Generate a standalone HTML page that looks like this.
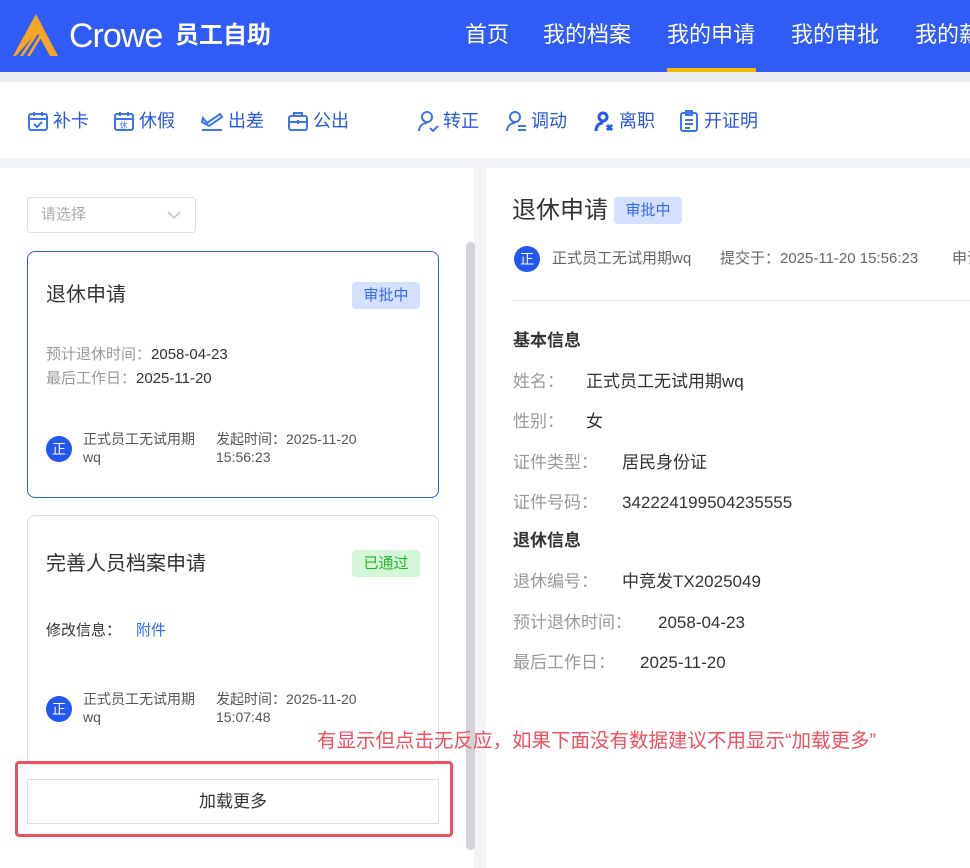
<!DOCTYPE html>
<html><head><meta charset="utf-8"><style>
*{margin:0;padding:0;box-sizing:border-box}
body{width:970px;height:868px;overflow:hidden;background:#f3f4f8;font-family:"Liberation Sans","Noto Sans CJK SC",sans-serif;position:relative}
.a{position:absolute;white-space:nowrap}
.hdr{position:absolute;left:0;top:0;width:970px;height:72px;background:#2f5cf6}
.nav{color:#fff;font-size:22px;top:20px;line-height:30px}
.tb{position:absolute;left:0;top:82px;width:970px;height:76px;background:#fff}
.ti{color:#2857e0;font-size:18px;top:109px;display:flex;align-items:center;gap:4px;line-height:24px}
.lp{position:absolute;left:0;top:168px;width:474px;height:700px;background:#fff}
.rp{position:absolute;left:486px;top:168px;width:484px;height:700px;background:#fff}
.card{position:absolute;left:27px;width:412px;border-radius:8px;background:#fff}
.tag{position:absolute;font-size:15px;border-radius:4px;text-align:center;line-height:27px}
.av{position:absolute;width:26px;height:26px;border-radius:50%;background:#2456f0;color:#fff;font-size:14px;text-align:center;line-height:26px}
.sm{font-size:14px;color:#555;line-height:18px}
.lb{color:#999;font-size:17px;line-height:22px}
.vl{color:#333;font-size:17px;line-height:22px}
.l20{line-height:20px}
</style></head><body>
<div class="hdr"></div>
<svg class="a" style="left:10px;top:12px" width="52" height="46" viewBox="0 0 52 46">
<path d="M26 2 L48 44 L40 44 L27 20 Z" fill="#f5a623"/>
<path d="M26 2 L27 20 L6 44 L3 44 Z" fill="#f5a623"/>
<path d="M28 22 L13 44 L10 44 L27 18 Z" fill="#f5a623"/>
<path d="M31 26 L20 44 L17 44 L30 22 Z" fill="#f5a623"/>
</svg>
<div class="a" style="left:69px;top:16px;color:#fff;font-size:34px;line-height:40px;letter-spacing:-1px">Crowe</div>
<div class="a" style="left:175px;top:21px;color:#fff;font-size:24px;line-height:30px;font-weight:bold">员工自助</div>
<div class="a nav" style="left:465px">首页</div>
<div class="a nav" style="left:543px">我的档案</div>
<div class="a nav" style="left:667px">我的申请</div>
<div class="a nav" style="left:791px">我的审批</div>
<div class="a nav" style="left:915px">我的薪资</div>
<div class="a" style="left:667px;top:68px;width:89px;height:4px;background:#f5b800"></div>
<div class="a" style="left:0;top:72px;width:970px;height:10px;background:#eceef2"></div>
<div class="tb"></div>
<div class="a ti" style="left:27px"><svg width="22" height="22" viewBox="0 0 22 22" fill="none" stroke="#3f74f0" stroke-width="2"><rect x="2" y="4" width="18" height="16" rx="2"/><path d="M2 9h18M7 2v4M15 2v4M7 14l3 3 5-5"/></svg>补卡</div>
<div class="a ti" style="left:113px"><svg width="22" height="22" viewBox="0 0 22 22" fill="none" stroke="#3f74f0" stroke-width="2"><rect x="2" y="4" width="18" height="16" rx="2"/><path d="M2 9h18M7 2v4M15 2v4"/><text x="6.5" y="18" font-size="8" fill="#3f74f0" stroke="none">休</text></svg>休假</div>
<div class="a ti" style="left:200px"><svg width="24" height="22" viewBox="0 0 24 22" fill="none" stroke="#3f74f0" stroke-width="2"><path d="M3 8l4 5 13-9 2 3-13 9-7-4zM2 20h20"/></svg>出差</div>
<div class="a ti" style="left:287px"><svg width="22" height="22" viewBox="0 0 22 22" fill="none" stroke="#3f74f0" stroke-width="2"><rect x="2" y="6" width="18" height="14" rx="2"/><path d="M7 6V3h8v3M2 12h18M11 10v4"/></svg>公出</div>
<div class="a ti" style="left:417px"><svg width="22" height="22" viewBox="0 0 22 22" fill="none" stroke="#3f74f0" stroke-width="2"><circle cx="10" cy="7" r="5"/><path d="M2 21c0-5 4-8 8-8M13 18l3 3 5-5"/></svg>转正</div>
<div class="a ti" style="left:505px"><svg width="22" height="22" viewBox="0 0 22 22" fill="none" stroke="#3f74f0" stroke-width="2"><circle cx="10" cy="7" r="5"/><path d="M2 21c0-5 4-8 8-8M13 16h8M13 20h8"/></svg>调动</div>
<div class="a ti" style="left:593px"><svg width="22" height="22" viewBox="0 0 22 22" fill="none" stroke="#2456f0" stroke-width="3"><circle cx="10" cy="7" r="4"/><path d="M3 21c0-5 3-8 7-8M14 15l5 5M19 15l-5 5"/></svg>离职</div>
<div class="a ti" style="left:678px"><svg width="22" height="22" viewBox="0 0 22 22" fill="none" stroke="#3f74f0" stroke-width="2"><rect x="3" y="3" width="16" height="18" rx="2"/><path d="M8 1h6v4H8zM7 10h8M7 14h8M7 18h5"/></svg>开证明</div>

<div class="lp"></div>
<div class="rp"></div>
<div class="a" style="left:27px;top:197px;width:169px;height:36px;border:1px solid #ddd;border-radius:4px;background:#fff"></div>
<div class="a l20" style="left:41px;top:205px;color:#aaa;font-size:15px">请选择</div>
<svg class="a" style="left:167px;top:210px" width="14" height="10"><path d="M1 2l6 6 6-6" fill="none" stroke="#bbb" stroke-width="1.3"/></svg>
<div class="a" style="left:466px;top:242px;width:9px;height:608px;border-radius:5px;background:#d2d3d7"></div>

<div class="card" style="top:251px;height:247px;border:1px solid #2b5ff0"></div>
<div class="a" style="left:46px;top:281px;font-size:20px;line-height:28px;color:#333">退休申请</div>
<div class="tag" style="left:352px;top:282px;width:68px;background:#d4e0fe;color:#2f6bf0">审批中</div>
<div class="a l20" style="left:46px;top:345px;font-size:15px;color:#999">预计退休时间：<span style="color:#333">2058-04-23</span></div>
<div class="a l20" style="left:46px;top:369px;font-size:15px;color:#999">最后工作日：<span style="color:#333">2025-11-20</span></div>
<div class="av" style="left:46px;top:436px">正</div>
<div class="a sm" style="left:83px;top:430px">正式员工无试用期<br>wq</div>
<div class="a sm" style="left:216px;top:430px">发起时间：2025-11-20<br>15:56:23</div>

<div class="card" style="top:515px;height:250px;border:1px solid #ddd"></div>
<div class="a" style="left:46px;top:550px;font-size:20px;line-height:28px;color:#333">完善人员档案申请</div>
<div class="tag" style="left:352px;top:550px;width:68px;background:#d5f5d8;color:#27b52e">已通过</div>
<div class="a l20" style="left:46px;top:621px;font-size:15px;color:#333">修改信息：</div>
<div class="a l20" style="left:136px;top:621px;font-size:15px;color:#2f6bf0">附件</div>
<div class="av" style="left:46px;top:696px">正</div>
<div class="a sm" style="left:83px;top:690px">正式员工无试用期<br>wq</div>
<div class="a sm" style="left:216px;top:690px">发起时间：2025-11-20<br>15:07:48</div>

<div class="a" style="left:15px;top:761px;width:438px;height:76px;border:3px solid #f0505f;border-radius:4px"></div>
<div class="a" style="left:27px;top:779px;width:412px;height:45px;border:1px solid #ddd;background:#fff;text-align:center;line-height:43px;font-size:17px;color:#333">加载更多</div>

<div class="a" style="left:512px;top:195px;font-size:24px;line-height:32px;color:#333">退休申请</div>
<div class="tag" style="left:614px;top:197px;width:68px;height:27px;background:#d4e0fe;color:#2f6bf0">审批中</div>
<div class="av" style="left:514px;top:246px">正</div>
<div class="a l20" style="left:552px;top:249px;font-size:15px;color:#666">正式员工无试用期wq</div>
<div class="a l20" style="left:720px;top:249px;font-size:15px;color:#666">提交于：2025-11-20 15:56:23</div>
<div class="a l20" style="left:952px;top:249px;font-size:15px;color:#666">申请</div>
<div class="a" style="left:512px;top:300px;width:458px;height:1px;background:#e2e2e2"></div>
<div class="a vl" style="left:513px;top:330px;font-weight:bold">基本信息</div>
<div class="a lb" style="left:513px;top:371px">姓名：</div><div class="a vl" style="left:586px;top:371px">正式员工无试用期wq</div>
<div class="a lb" style="left:513px;top:411px">性别：</div><div class="a vl" style="left:586px;top:411px">女</div>
<div class="a lb" style="left:513px;top:452px">证件类型：</div><div class="a vl" style="left:622px;top:452px">居民身份证</div>
<div class="a lb" style="left:513px;top:492px">证件号码：</div><div class="a vl" style="left:622px;top:492px">342224199504235555</div>
<div class="a vl" style="left:513px;top:530px;font-weight:bold">退休信息</div>
<div class="a lb" style="left:513px;top:571px">退休编号：</div><div class="a vl" style="left:622px;top:571px">中竞发TX2025049</div>
<div class="a lb" style="left:513px;top:612px">预计退休时间：</div><div class="a vl" style="left:658px;top:612px">2058-04-23</div>
<div class="a lb" style="left:513px;top:652px">最后工作日：</div><div class="a vl" style="left:640px;top:652px">2025-11-20</div>

<div class="a" style="left:317px;top:729px;font-size:19.5px;line-height:24px;color:#f0505f;z-index:5">有显示但点击无反应，如果下面没有数据建议不用显示“加载更多”</div>
</body></html>
